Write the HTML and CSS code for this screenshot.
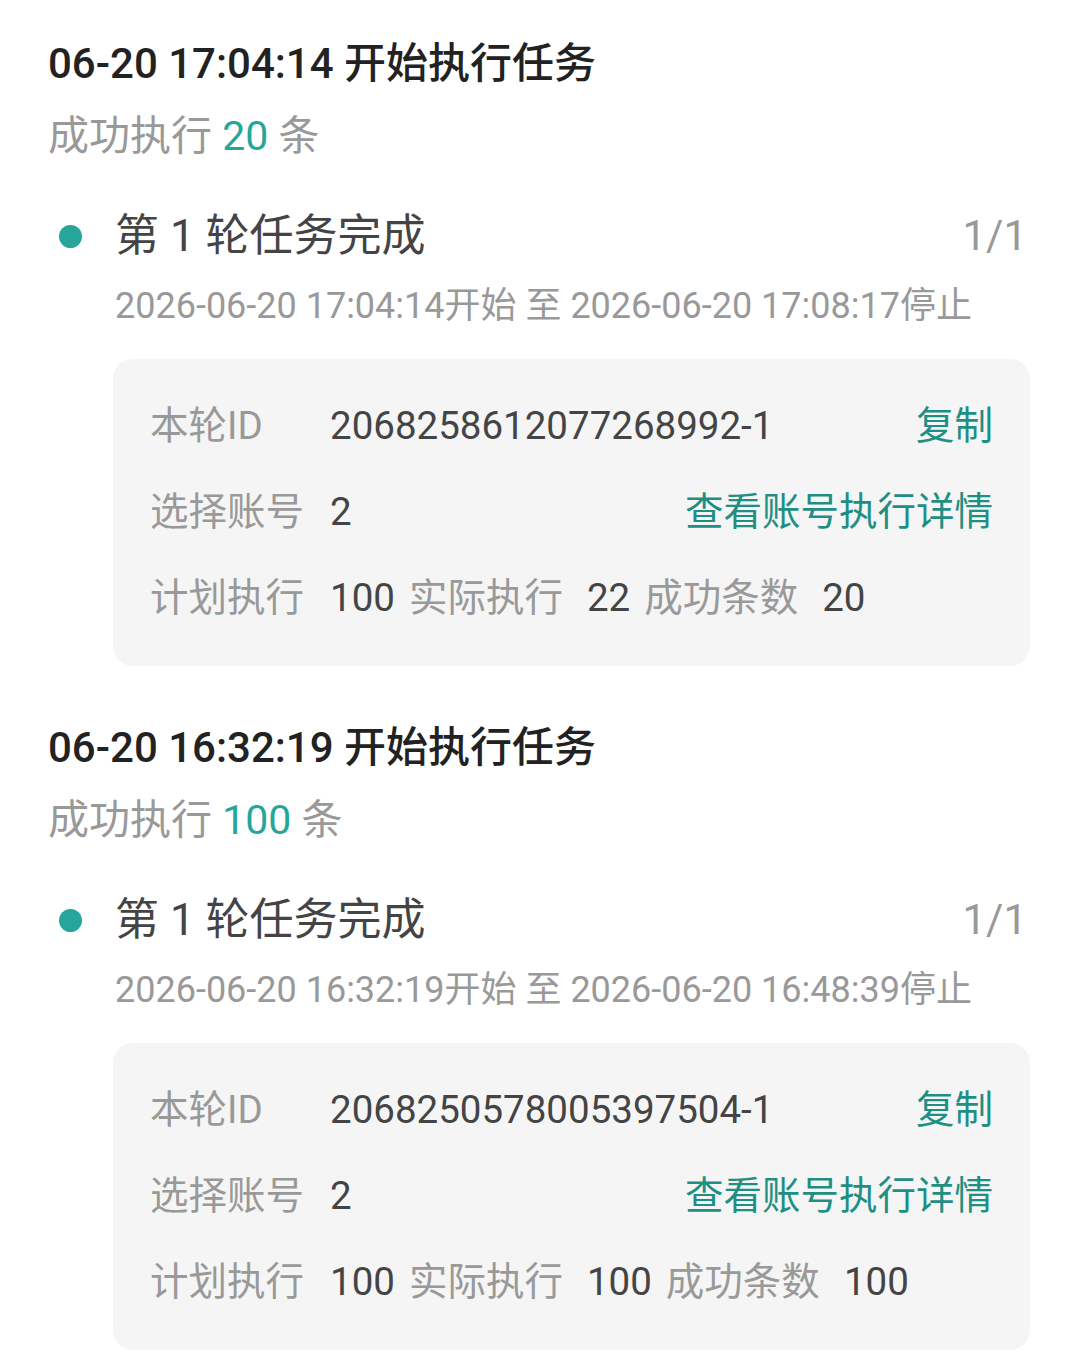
FILE: index.html
```html
<!DOCTYPE html>
<html lang="zh-CN">
<head>
<meta charset="utf-8">
<link rel="stylesheet" href="styles.css">
</head>
<body>
<div class="list">
  <div class="section">
    <div class="title">06-20 17:04:14 开始执行任务</div>
    <div class="subtitle">成功执行 <span class="num">20</span> 条</div>
    <div class="round">
      <span class="dot"></span>
      <span class="round-name">第 1 轮任务完成</span>
      <span class="round-count">1/1</span>
    </div>
    <div class="dates">2026-06-20 17:04:14开始 至 2026-06-20 17:08:17停止</div>
    <div class="card">
      <div class="row">
        <span class="label">本轮ID</span>
        <span class="value">2068258612077268992-1</span>
        <span class="link">复制</span>
      </div>
      <div class="row">
        <span class="label">选择账号</span>
        <span class="value">2</span>
        <span class="link">查看账号执行详情</span>
      </div>
      <div class="row">
        <span class="label">计划执行</span>
        <span class="value v-gap">100</span>
        <span class="label-inline">实际执行</span>
        <span class="value v-gap">22</span>
        <span class="label-inline">成功条数</span>
        <span class="value">20</span>
      </div>
    </div>
  </div>
  <div class="section">
    <div class="title">06-20 16:32:19 开始执行任务</div>
    <div class="subtitle">成功执行 <span class="num">100</span> 条</div>
    <div class="round">
      <span class="dot"></span>
      <span class="round-name">第 1 轮任务完成</span>
      <span class="round-count">1/1</span>
    </div>
    <div class="dates">2026-06-20 16:32:19开始 至 2026-06-20 16:48:39停止</div>
    <div class="card">
      <div class="row">
        <span class="label">本轮ID</span>
        <span class="value">2068250578005397504-1</span>
        <span class="link">复制</span>
      </div>
      <div class="row">
        <span class="label">选择账号</span>
        <span class="value">2</span>
        <span class="link">查看账号执行详情</span>
      </div>
      <div class="row">
        <span class="label">计划执行</span>
        <span class="value v-gap">100</span>
        <span class="label-inline">实际执行</span>
        <span class="value v-gap">100</span>
        <span class="label-inline">成功条数</span>
        <span class="value">100</span>
      </div>
    </div>
  </div>
</div>
</body>
</html>
```

FILE: styles.css
```css
* { box-sizing: border-box; }
html, body {
  margin: 0;
  padding: 0;
  background: #ffffff;
}
body {
  font-family: Roboto, "Noto Sans CJK SC", sans-serif;
  width: 1079px;
  height: 1359px;
  overflow: hidden;
}
.list {
  padding: 28px 49px 0 48px;
}
.section {
  margin-bottom: 46px;
}
.title {
  font-size: 42px;
  line-height: 72px;
  font-weight: 500;
  color: #222222;
  white-space: nowrap;
}
.subtitle {
  font-size: 41px;
  line-height: 72px;
  color: #999999;
}
.num {
  color: #26a69a;
}
.round {
  display: flex;
  align-items: center;
  margin-top: 34px;
  height: 60px;
}
.dot {
  width: 23px;
  height: 23px;
  border-radius: 50%;
  background: #26a69a;
  margin-left: 11px;
  margin-right: 33px;
  flex: none;
}
.round-name {
  font-size: 44px;
  color: #444444;
  line-height: 60px;
  flex: 1;
}
.round-count {
  font-size: 42px;
  color: #999999;
  line-height: 60px;
  margin-right: 3px;
}
.dates {
  font-size: 36px;
  line-height: 50px;
  color: #999999;
  margin-top: 15px;
  padding-left: 67px;
  white-space: nowrap;
}
.card {
  margin-top: 28px;
  margin-left: 65px;
  background: #f5f5f5;
  border-radius: 20px;
  padding: 24px 37px 25px;
}
.row {
  display: flex;
  align-items: baseline;
  height: 86px;
  line-height: 86px;
  font-size: 38.5px;
  white-space: nowrap;
}
.label {
  width: 180px;
  flex: none;
  color: #999999;
}
.label-inline {
  color: #999999;
  margin-right: 24px;
}
.value {
  color: #444444;
}
.v-gap {
  margin-right: 14px;
}
.link {
  margin-left: auto;
  color: #1f8f84;
}
```
